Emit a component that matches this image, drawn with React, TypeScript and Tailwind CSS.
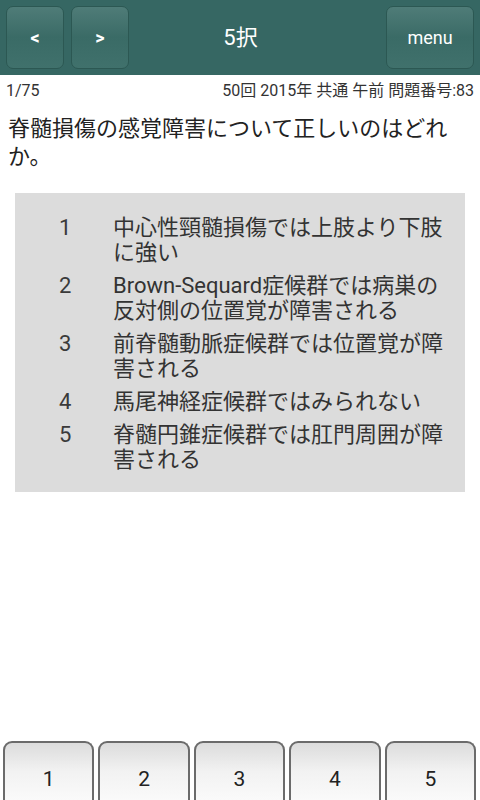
const choices = [
  { no: 1, lines: ['中心性頸髄損傷では上肢より下肢', 'に強い'] },
  { no: 2, lines: ['Brown-Sequard症候群では病巣の', '反対側の位置覚が障害される'] },
  { no: 3, lines: ['前脊髄動脈症候群では位置覚が障', '害される'] },
  { no: 4, lines: ['馬尾神経症候群ではみられない'] },
  { no: 5, lines: ['脊髄円錐症候群では肛門周囲が障', '害される'] },
]

function HeaderButton({ label, className }: { label: string; className: string }) {
  return (
    <button
      className={`flex h-[63px] items-center justify-center rounded-[7px] border border-[#2c5853] bg-linear-to-b from-[#4f7c78] via-[#3a6b66] to-[#40716c] text-white ${className}`}
    >
      {label}
    </button>
  )
}

export default function App() {
  return (
    <div
      className="flex h-[800px] w-[480px] flex-col overflow-hidden bg-white"
      style={{ fontFamily: "Roboto, 'Noto Sans CJK JP', sans-serif" }}
    >
      <header className="flex h-[75px] items-center bg-[#366763] px-[6px]">
        <HeaderButton label="<" className="w-[58px] text-[18px] font-bold" />
        <HeaderButton label=">" className="ml-[7px] w-[58px] text-[18px] font-bold" />
        <div className="flex-1 pr-[34px] text-center text-[22px] text-white">5択</div>
        <HeaderButton label="menu" className="w-[88px] text-[18px]" />
      </header>

      <div className="flex h-[32px] items-center justify-between px-[6px] text-[16px] text-[#333]">
        <span>1/75</span>
        <span>50回 2015年 共通 午前 問題番号:83</span>
      </div>

      <p className="mt-[8px] px-[8px] text-[22px] leading-[28px] text-[#222]">
        脊髄損傷の感覚障害について正しいのはどれか。
      </p>

      <div className="mx-[15px] mt-[22px] flex flex-col gap-[8px] bg-[#dcdcdc] pt-[22px] pb-[20px] text-[22px] leading-[25px] text-[#333]">
        {choices.map((c) => (
          <div key={c.no} className="flex">
            <span className="w-[98px] pl-[44px] text-[#3a3a3a]">{c.no}</span>
            <span className="flex flex-col">
              {c.lines.map((l) => (
                <span key={l}>{l}</span>
              ))}
            </span>
          </div>
        ))}
      </div>

      <div className="mt-auto flex gap-[4px] pl-[3px] pr-[4px]">
        {[1, 2, 3, 4, 5].map((n) => (
          <button
            key={n}
            className="flex h-[59px] flex-1 items-center justify-center rounded-t-[9px] border-2 border-b-0 border-[#6b6b6b] bg-linear-to-b from-[#dcdcdc] via-[#f2f2f2] to-[#fafafa] pt-[17px] text-[21px] text-[#222]"
          >
            {n}
          </button>
        ))}
      </div>
    </div>
  )
}
